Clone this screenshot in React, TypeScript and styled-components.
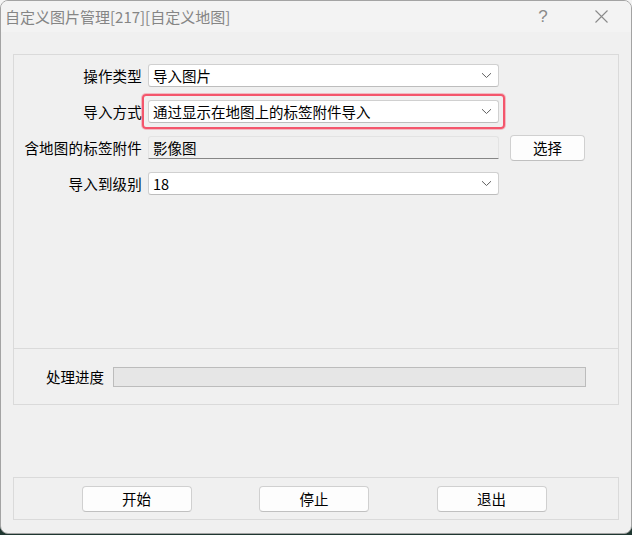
import styled, { createGlobalStyle } from "styled-components";

const GlobalStyle = createGlobalStyle`
	html, body {
		margin: 0;
		padding: 0;
	}
	body {
		width: 632px;
		height: 535px;
		overflow: hidden;
		background: linear-gradient(to bottom, #f4f4f4 0 50%, #1f3731 50% 100%);
		font-family: "Noto Sans CJK SC", "Noto Sans", sans-serif;
	}
`;

const Window = styled.div`
	box-sizing: border-box;
	width: 632px;
	height: 534px;
	display: flex;
	flex-direction: column;
	background-color: #f0f0f0;
	border: 1px solid #a3a3a3;
	border-radius: 8px;
	overflow: hidden;
`;

const TitleBar = styled.div`
	height: 31px;
	flex: none;
	display: flex;
	align-items: center;
	background-color: #f3f3f3;
	padding-left: 4px;
	color: #858585;
	font-size: 15px;
	line-height: 20px;
`;

const TitleText = styled.div`
	flex: 1;
	white-space: nowrap;
`;

const CaptionButton = styled.div<{ $wide?: number }>`
	width: ${(p) => p.$wide ?? 46}px;
	height: 31px;
	display: flex;
	align-items: center;
	justify-content: center;
	color: #8a8a8a;
	font-family: "Liberation Sans", sans-serif;
	font-size: 17px;
`;

const Client = styled.div`
	flex: 1;
	display: flex;
	flex-direction: column;
	padding: 22px 12px 0 12px;
	font-size: 14.5px;
	color: #000;
`;

const Group = styled.div<{ $height: number; $noTop?: boolean }>`
	box-sizing: border-box;
	height: ${(p) => p.$height}px;
	border: 1px solid #dadada;
	${(p) => (p.$noTop ? "border-top: none;" : "")}
`;

const Form = styled.div`
	display: grid;
	grid-template-columns: 128px 351px 74px;
	grid-auto-rows: 23px;
	column-gap: 6px;
	row-gap: 13px;
	align-items: center;
	padding-top: 9px;
`;

const Label = styled.div`
	text-align: right;
	white-space: nowrap;
	line-height: 20px;
	letter-spacing: 0.2px;
`;

const FieldCell = styled.div`
	position: relative;
	height: 23px;
`;

const Combo = styled.div`
	box-sizing: border-box;
	height: 23px;
	display: flex;
	align-items: center;
	justify-content: space-between;
	padding: 0 6px 0 4px;
	background-color: #ffffff;
	border: 1px solid #d0d0d0;
	border-bottom-color: #bdbdbd;
	border-radius: 3px;
	line-height: 20px;
	white-space: nowrap;
`;

const ReadOnlyField = styled(Combo)`
	background-color: #f0f0f0;
	border-color: #e3e3e3;
	border-bottom-color: #868686;
	border-radius: 3px 3px 0 0;
`;

const Highlight = styled.div`
	position: absolute;
	left: -6px;
	right: -6px;
	top: -6px;
	bottom: -6px;
	border: 2px solid #f4566c;
	border-radius: 4px;
	box-shadow: 0 0 0 1px rgba(244, 86, 108, 0.35);
	pointer-events: none;
`;

const PushButton = styled.button<{ $width: number }>`
	box-sizing: border-box;
	width: ${(p) => p.$width}px;
	height: 26px;
	padding: 0;
	background-color: #fdfdfd;
	border: 1px solid #d0d0d0;
	border-bottom-color: #c0c0c0;
	border-radius: 4px;
	font-family: inherit;
	font-size: 14.5px;
	line-height: 20px;
	color: #000;
`;

const SelectButton = styled(PushButton)`
	margin-left: 5px;
`;

const ProgressRow = styled.div`
	height: 100%;
	display: flex;
	align-items: center;
	gap: 9px;
`;

const ProgressLabel = styled.div`
	width: 90px;
	text-align: right;
	line-height: 20px;
`;

const ProgressBar = styled.div`
	box-sizing: border-box;
	width: 473px;
	height: 20px;
	background-color: #e6e6e6;
	border: 1px solid #bcbcbc;
`;

const Spacer = styled.div`
	height: 72px;
`;

const ButtonRow = styled.div`
	height: 100%;
	display: flex;
	align-items: center;
	justify-content: space-evenly;
	padding-right: 4px;
`;

const Chevron = () => (
	<svg width="11" height="7" viewBox="0 0 11 7">
		<path d="M1 1.2 L5.5 5.5 L10 1.2" fill="none" stroke="#5f5f5f" strokeWidth="1" />
	</svg>
);

const CloseIcon = () => (
	<svg width="13" height="13" viewBox="0 0 13 13">
		<path d="M0.5 0.5 L12.5 12.5 M12.5 0.5 L0.5 12.5" stroke="#8a8a8a" strokeWidth="1.1" />
	</svg>
);

const App = () => {
	return (
		<>
			<GlobalStyle />
			<Window>
				<TitleBar>
					<TitleText>自定义图片管理[217][自定义地图]</TitleText>
					<CaptionButton>?</CaptionButton>
					<CaptionButton $wide={12} />
					<CaptionButton>
						<CloseIcon />
					</CaptionButton>
					<CaptionButton $wide={7} />
				</TitleBar>
				<Client>
					<Group $height={295}>
						<Form>
							<Label>操作类型</Label>
							<FieldCell>
								<Combo>
									<span>导入图片</span>
									<Chevron />
								</Combo>
							</FieldCell>
							<div />

							<Label>导入方式</Label>
							<FieldCell>
								<Combo>
									<span>通过显示在地图上的标签附件导入</span>
									<Chevron />
								</Combo>
								<Highlight />
							</FieldCell>
							<div />

							<Label>含地图的标签附件</Label>
							<FieldCell>
								<ReadOnlyField>
									<span>影像图</span>
								</ReadOnlyField>
							</FieldCell>
							<SelectButton $width={75}>选择</SelectButton>

							<Label>导入到级别</Label>
							<FieldCell>
								<Combo>
									<span>18</span>
									<Chevron />
								</Combo>
							</FieldCell>
							<div />
						</Form>
					</Group>
					<Group $height={56} $noTop>
						<ProgressRow>
							<ProgressLabel>处理进度</ProgressLabel>
							<ProgressBar />
						</ProgressRow>
					</Group>
					<Spacer />
					<Group $height={43}>
						<ButtonRow>
							<PushButton $width={110}>开始</PushButton>
							<PushButton $width={110}>停止</PushButton>
							<PushButton $width={110}>退出</PushButton>
						</ButtonRow>
					</Group>
				</Client>
			</Window>
		</>
	);
};

export default App;
